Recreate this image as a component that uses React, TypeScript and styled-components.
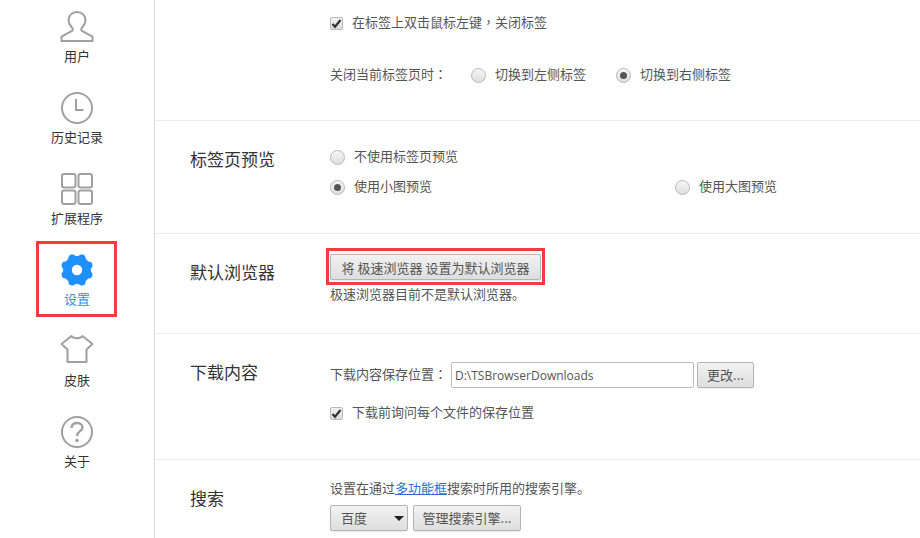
import React from "react";
import styled, { createGlobalStyle } from "styled-components";

const Global = createGlobalStyle`
  html, body { margin: 0; padding: 0; background: #fff; overflow: hidden; }
  body { font-family: "Noto Sans CJK SC", "Liberation Sans", sans-serif; font-size: 13px; color: #555; }
`;

const Page = styled.div`
  display: flex;
  width: 920px;
  height: 538px;
  overflow: hidden;
`;

const Sidebar = styled.nav`
  flex: 0 0 154px;
  border-right: 1px solid #dcdcdc;
  display: flex;
  flex-direction: column;
`;

const NavItem = styled.div<{ $active?: boolean }>`
  position: relative;
  height: 81px;
  display: flex;
  flex-direction: column;
  align-items: center;
  padding-top: 10px;
  box-sizing: border-box;
  color: ${(p) => (p.$active ? "#3b8fe0" : "#333")};
`;

const NavIcon = styled.svg`
  width: 34px;
  height: 34px;
  display: block;
  fill: none;
  stroke: #a0a0a0;
  stroke-width: 2;
`;

const NavLabel = styled.span`
  font-size: 13px;
  line-height: 18px;
  margin-top: 3px;
`;

const NavHighlight = styled.span`
  position: absolute;
  left: 36px;
  top: -2px;
  width: 81px;
  height: 76px;
  box-sizing: border-box;
  border: 3px solid #f63b3b;
`;

const Main = styled.main`
  flex: 1;
  display: flex;
  flex-direction: column;
`;

const Section = styled.section<{ $height?: number }>`
  display: grid;
  grid-template-columns: 175px 1fr;
  box-sizing: border-box;
  height: ${(p) => (p.$height ? `${p.$height}px` : "auto")};
  border-bottom: ${(p) => (p.$height ? "1px solid #ececec" : "none")};
`;

const Title = styled.h2`
  margin: 0;
  padding: 27px 0 0 35px;
  font-size: 17px;
  font-weight: 400;
  line-height: 22px;
  color: #333;
`;

const Content = styled.div<{ $top: number }>`
  display: flex;
  flex-direction: column;
  align-items: flex-start;
  padding-top: ${(p) => p.$top}px;
`;

const Row = styled.div<{ $mt?: number }>`
  display: flex;
  align-items: center;
  height: 18px;
  line-height: 18px;
  white-space: nowrap;
  margin-top: ${(p) => p.$mt ?? 0}px;
`;

const Punct = styled.span`
  font-family: "Noto Sans CJK TC", "Noto Sans CJK SC", sans-serif;
`;

const CheckBox = styled.span`
  width: 13px;
  height: 13px;
  box-sizing: border-box;
  border: 1px solid #b9b9b9;
  border-radius: 2px;
  background: linear-gradient(#f2f2f2, #dcdcdc);
  margin: 2px 9px 0 0;
  display: flex;
  align-items: center;
  justify-content: center;
`;

const Radio = styled.span<{ $on?: boolean }>`
  width: 15px;
  height: 15px;
  box-sizing: border-box;
  border: 1px solid #b9b9b9;
  border-radius: 50%;
  background: linear-gradient(#f6f6f6, #dedede);
  margin: 2px 9px 0 0;
  display: flex;
  align-items: center;
  justify-content: center;
  &::after {
    content: "";
    display: ${(p) => (p.$on ? "block" : "none")};
    width: 7px;
    height: 7px;
    border-radius: 50%;
    background: #555;
  }
`;

const Button = styled.button<{ $ml?: number; $w: number }>`
  font: inherit;
  font-size: 13px;
  color: #555;
  width: ${(p) => p.$w}px;
  height: 26px;
  padding: 0;
  margin-left: ${(p) => p.$ml ?? 0}px;
  box-sizing: border-box;
  border: 1px solid #b4b4b4;
  border-radius: 2px;
  background: linear-gradient(#f2f2f2, #dedede);
  box-shadow: 0 1px 1px rgba(0, 0, 0, 0.08);
  white-space: nowrap;
`;

const FieldButton = styled(Button)`
  margin-top: 2px;
`;

const SelectBox = styled(Button)`
  display: flex;
  align-items: center;
  justify-content: space-between;
  padding: 0 3px 0 10px;
  &::after {
    content: "";
    margin-right: 0;
    border-left: 5px solid transparent;
    border-right: 5px solid transparent;
    border-top: 5px solid #222;
  }
`;

const HighlightWrap = styled.div`
  position: relative;
  display: flex;
`;

const ButtonHighlight = styled.span`
  position: absolute;
  left: -4px;
  top: -6px;
  width: 219px;
  height: 37px;
  box-sizing: border-box;
  border: 3px solid #f63b3b;
  pointer-events: none;
`;

const PathInput = styled.input`
  font: inherit;
  font-family: "Open Sans", "Liberation Sans", sans-serif;
  font-size: 12px;
  color: #555;
  width: 243px;
  height: 26px;
  box-sizing: border-box;
  border: 1px solid #bcbcbc;
  border-radius: 2px;
  padding: 0 3px;
  margin: 2px 3px 0 0;
  outline: none;
`;

const Link = styled.a`
  color: #2a6fd6;
  text-decoration: underline;
`;

const Label = styled.span<{ $w?: number }>`
  display: inline-block;
  width: ${(p) => (p.$w ? `${p.$w}px` : "auto")};
`;

const Check = () => (
  <CheckBox>
    <svg width="11" height="11" viewBox="0 0 11 11">
      <path d="M1.5 6 L4 8.8 L9.5 2" fill="none" stroke="#333" strokeWidth="2.2" />
    </svg>
  </CheckBox>
);

const lobes = [0, 45, 90, 135, 180, 225, 270, 315];

export default function App() {
  return (
    <Page>
      <Global />
      <Sidebar>
        <NavItem>
          <NavIcon viewBox="0 0 34 34">
            <path d="M1.5 31 V26.5 L12 21 C13.5 20 13 18.5 11.5 17 C9.5 15 8.5 13 8.5 10.5 C8.5 5.5 12 2 17 2 C22 2 25.5 5.5 25.5 10.5 C25.5 13 24.5 15 22.5 17 C21 18.5 20.5 20 22 21 L32.5 26.5 V31 Z" />
          </NavIcon>
          <NavLabel>用户</NavLabel>
        </NavItem>
        <NavItem>
          <NavIcon viewBox="0 0 34 34">
            <circle cx="17" cy="17" r="15" />
            <path d="M16 8 V19 H23.5" />
          </NavIcon>
          <NavLabel>历史记录</NavLabel>
        </NavItem>
        <NavItem>
          <NavIcon viewBox="0 0 34 34">
            <rect x="2" y="2" width="13.5" height="13.5" rx="2" />
            <rect x="18.5" y="2" width="13.5" height="13.5" rx="2" />
            <rect x="2" y="18.5" width="13.5" height="13.5" rx="2" />
            <rect x="18.5" y="18.5" width="13.5" height="13.5" rx="2" />
          </NavIcon>
          <NavLabel>扩展程序</NavLabel>
        </NavItem>
        <NavItem $active>
          <NavHighlight />
          <NavIcon viewBox="0 0 34 34" style={{ stroke: "none" }}>
            <circle cx="17" cy="17" r="14" fill="#1e90ff" />
            {lobes.map((a) => (
              <circle
                key={a}
                cx={17 + 12.6 * Math.cos((a * Math.PI) / 180 + Math.PI / 8)}
                cy={17 + 12.6 * Math.sin((a * Math.PI) / 180 + Math.PI / 8)}
                r="3.8"
                fill="#1e90ff"
              />
            ))}
            <circle cx="17" cy="17" r="5.2" fill="#fff" />
          </NavIcon>
          <NavLabel>设置</NavLabel>
        </NavItem>
        <NavItem>
          <NavIcon viewBox="0 0 34 34">
            <path d="M11.5 2 L1.5 10 L7.5 15.5 V28 H26.5 V15.5 L32.5 10 L22.5 2 C20.5 5 13.5 5 11.5 2 Z" strokeLinejoin="round" />
          </NavIcon>
          <NavLabel>皮肤</NavLabel>
        </NavItem>
        <NavItem>
          <NavIcon viewBox="0 0 34 34">
            <circle cx="17" cy="17" r="15" />
            <path d="M11.5 13 C11.5 9.5 14 8 17 8 C20.5 8 22.5 10 22.5 12.5 C22.5 16 17 16.5 17 21" strokeWidth="2.4" />
            <circle cx="17" cy="25.5" r="1.8" fill="#a0a0a0" stroke="none" />
          </NavIcon>
          <NavLabel>关于</NavLabel>
        </NavItem>
      </Sidebar>
      <Main>
        <Section $height={121}>
          <div />
          <Content $top={13}>
            <Row>
              <Check />
              在标签上双击鼠标左键<Punct>，</Punct>关闭标签
            </Row>
            <Row $mt={34}>
              <Label $w={141}>
                关闭当前标签页时<Punct>：</Punct>
              </Label>
              <Radio />
              <Label $w={121}>切换到左侧标签</Label>
              <Radio $on />
              切换到右侧标签
            </Row>
          </Content>
        </Section>
        <Section $height={113}>
          <Title>标签页预览</Title>
          <Content $top={26}>
            <Row>
              <Radio />
              不使用标签页预览
            </Row>
            <Row $mt={12}>
              <Radio $on />
              <Label $w={321}>使用小图预览</Label>
              <Radio />
              使用大图预览
            </Row>
          </Content>
        </Section>
        <Section $height={100}>
          <Title>默认浏览器</Title>
          <Content $top={20}>
            <HighlightWrap>
              <Button $w={211}>将 极速浏览器 设置为默认浏览器</Button>
              <ButtonHighlight />
            </HighlightWrap>
            <Row $mt={5}>极速浏览器目前不是默认浏览器。</Row>
          </Content>
        </Section>
        <Section $height={126}>
          <Title>下载内容</Title>
          <Content $top={31}>
            <Row>
              <Label $w={121}>
                下载内容保存位置<Punct>：</Punct>
              </Label>
              <PathInput readOnly value="D:\TSBrowserDownloads" />
              <FieldButton $w={57}>更改...</FieldButton>
            </Row>
            <Row $mt={20}>
              <Check />
              下载前询问每个文件的保存位置
            </Row>
          </Content>
        </Section>
        <Section>
          <Title>搜索</Title>
          <Content $top={19}>
            <Row>
              设置在通过<Link>多功能框</Link>搜索时所用的搜索引擎。
            </Row>
            <Row $mt={12}>
              <SelectBox as="div" $w={78}>百度</SelectBox>
              <Button $w={108} $ml={5}>管理搜索引擎...</Button>
            </Row>
          </Content>
        </Section>
      </Main>
    </Page>
  );
}
